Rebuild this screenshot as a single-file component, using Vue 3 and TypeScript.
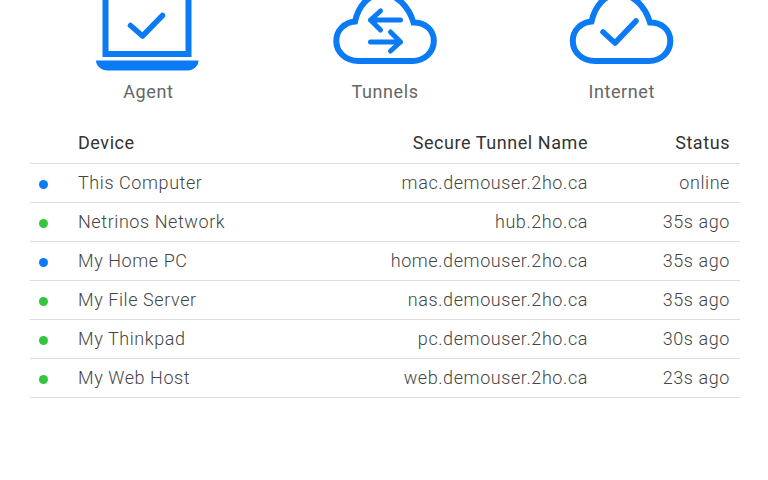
<script setup lang="ts">
interface Row {
  color: 'blue' | 'green'
  device: string
  tunnel: string
  status: string
}

const rows: Row[] = [
  { color: 'blue', device: 'This Computer', tunnel: 'mac.demouser.2ho.ca', status: 'online' },
  { color: 'green', device: 'Netrinos Network', tunnel: 'hub.2ho.ca', status: '35s ago' },
  { color: 'blue', device: 'My Home PC', tunnel: 'home.demouser.2ho.ca', status: '35s ago' },
  { color: 'green', device: 'My File Server', tunnel: 'nas.demouser.2ho.ca', status: '35s ago' },
  { color: 'green', device: 'My Thinkpad', tunnel: 'pc.demouser.2ho.ca', status: '30s ago' },
  { color: 'green', device: 'My Web Host', tunnel: 'web.demouser.2ho.ca', status: '23s ago' },
]

const cloud =
  'M358 61H412C424 61 433.3 52 433.3 41C433.3 30 425 22.5 413 22.5C408 6 396 -6 382 -6C368 -6 358 6 354.5 21.5C344 22.5 335.8 30 335.8 41C335.8 52 345 61 358 61Z'
</script>

<template>
  <main class="page">
    <section class="icons">
      <figure class="item">
        <svg class="icon" viewBox="92.500 0 112 72" width="112" height="72" aria-hidden="true">
          <rect x="106" y="-3.500" width="83" height="57.500" fill="none" stroke="#0a7bf5" stroke-width="6" />
          <path d="M96.500 60.500H199C199 66 194 70.500 188 70.500H108C102 70.500 96.500 66 96.500 60.500Z" fill="#0a7bf5" />
          <path d="M131 25.500L143 36L163 15.500" fill="none" stroke="#0a7bf5" stroke-width="5.500" stroke-linecap="round" stroke-linejoin="round" />
        </svg>
        <figcaption>Agent</figcaption>
      </figure>
      <figure class="item">
        <svg class="icon" viewBox="328.500 0 112 72" width="112" height="72" aria-hidden="true">
          <path :d="cloud" fill="none" stroke="#0a7bf5" stroke-width="6" />
          <path d="M400 20H370M380 11L370 20L380 30M370 42H400M390 32L400 42L390 51" fill="none" stroke="#0a7bf5" stroke-width="5" stroke-linecap="round" stroke-linejoin="round" />
        </svg>
        <figcaption>Tunnels</figcaption>
      </figure>
      <figure class="item">
        <svg class="icon" viewBox="329 0 112 72" width="112" height="72" aria-hidden="true">
          <path :d="cloud" fill="none" stroke="#0a7bf5" stroke-width="6" />
          <path d="M366 32L378 43L399 21" fill="none" stroke="#0a7bf5" stroke-width="5.500" stroke-linecap="round" stroke-linejoin="round" />
        </svg>
        <figcaption>Internet</figcaption>
      </figure>
    </section>

    <table class="devices">
      <thead>
        <tr>
          <th class="dot-cell"></th>
          <th class="left">Device</th>
          <th class="right">Secure Tunnel Name</th>
          <th class="right status">Status</th>
        </tr>
      </thead>
      <tbody>
        <tr v-for="row in rows" :key="row.device">
          <td class="dot-cell"><span class="dot" :class="row.color"></span></td>
          <td class="left">{{ row.device }}</td>
          <td class="right">{{ row.tunnel }}</td>
          <td class="right status">{{ row.status }}</td>
        </tr>
      </tbody>
    </table>
  </main>
</template>

<style>
html,
body {
  background: #fff;
}
</style>

<style scoped>
.page {
  width: 768px;
  height: 480px;
  box-sizing: border-box;
  padding: 0 28px 0 30px;
  overflow: hidden;
  font-family: Roboto, "Liberation Sans", sans-serif;
  font-size: 18px;
}
.icons {
  display: grid;
  grid-template-columns: repeat(3, 1fr);
}
.item {
  margin: 0;
  display: flex;
  flex-direction: column;
  align-items: center;
}
.icon {
  display: block;
}
figcaption {
  margin-top: 7px;
  line-height: 26px;
  color: #666;
  letter-spacing: 0.6px;
}
.devices {
  width: 710px;
  margin-top: 19px;
  border-collapse: collapse;
}
th,
td {
  padding: 0 0 2px;
  border-bottom: 1px solid #ddd;
}
th {
  height: 37px;
  color: #333;
  font-weight: 400;
  letter-spacing: 0.56px;
}
td {
  height: 36px;
  color: #444;
  font-weight: 300;
  letter-spacing: 0.58px;
}
.dot-cell {
  width: 48px;
}
.left {
  text-align: left;
}
.right {
  text-align: right;
}
.status {
  width: 142px;
  padding-right: 10px;
}
.dot {
  display: block;
  width: 9px;
  height: 9px;
  margin: 5px 0 0 9px;
  border-radius: 50%;
}
.dot.blue {
  background: #0a7bf5;
}
.dot.green {
  background: #35c63f;
}
</style>
